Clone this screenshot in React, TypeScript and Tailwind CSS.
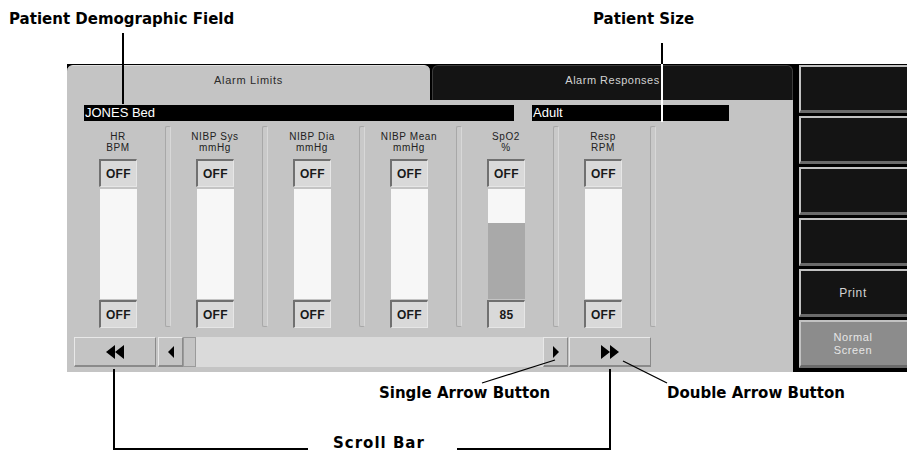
import React from 'react';

const COLUMNS = [
  { top: 'HR', unit: 'BPM', low: 'OFF' },
  { top: 'NIBP Sys', unit: 'mmHg', low: 'OFF' },
  { top: 'NIBP Dia', unit: 'mmHg', low: 'OFF' },
  { top: 'NIBP Mean', unit: 'mmHg', low: 'OFF' },
  { top: 'SpO2', unit: '%', low: '85', fill: true },
  { top: 'Resp', unit: 'RPM', low: 'OFF' },
];

const SIDE_KEYS = ['', '', '', '', 'Print'];

function DoubleArrow({ flip }: { flip?: boolean }) {
  return (
    <svg width="18" height="14" viewBox="0 0 18 14" className={flip ? 'rotate-180' : ''}>
      <polygon points="9,0 0,7 9,14" fill="#000" />
      <polygon points="18,0 9,7 18,14" fill="#000" />
    </svg>
  );
}

function SingleArrow({ flip }: { flip?: boolean }) {
  return (
    <svg width="6" height="12" viewBox="0 0 6 12" className={flip ? 'rotate-180' : ''}>
      <polygon points="6,0 0,6 6,12" fill="#000" />
    </svg>
  );
}

function ValueBox({ text }: { text: string }) {
  return (
    <div className="w-[38px] h-[28px] mx-auto flex items-center justify-center bg-[#d9d9d9] border-t-2 border-l-2 border-r border-b border-t-[#707070] border-l-[#707070] border-r-[#e6e6e6] border-b-[#e6e6e6] text-[12px] font-bold tracking-[0.4px] text-[#1a1a1a]">
      {text}
    </div>
  );
}

function Bevel({ className, children }: { className: string; children?: React.ReactNode }) {
  return (
    <div className={`flex items-center justify-center bg-[#c4c4c4] border-t border-l border-b-2 border-r border-t-[#e8e8e8] border-l-[#e8e8e8] border-b-[#8a8a8a] border-r-[#8a8a8a] ${className}`}>
      {children}
    </div>
  );
}

export default function App() {
  return (
    <div className="relative w-[907px] h-[452px] bg-white overflow-hidden font-['Liberation_Sans',Arial,sans-serif]">
      <div className="pl-[67px] pt-[64px]">
        <div className="w-[840px] h-[308px] bg-black flex overflow-hidden">
          {/* Main monitor panel */}
          <div className="w-[728px] flex flex-col">
            <div className="h-[36px] pt-[1px] flex gap-[2px]">
              <div className="w-[363px] bg-[#c4c4c4] rounded-t-[6px] border-t border-[#dedede] flex items-center justify-center pb-[6px] text-[11px] tracking-[0.7px] text-[#2a2a2a]">
                Alarm Limits
              </div>
              <div className="w-[361px] bg-[#141414] rounded-t-[6px] border border-b-0 border-[#3c3c3c] flex items-center justify-center pb-[6px] text-[11px] tracking-[0.5px] text-[#d2d2d2]">
                Alarm Responses
              </div>
            </div>

            <div className="flex-1 bg-[#c4c4c4] flex flex-col">
              <div className="mt-[5px] pl-[17px] flex gap-[18px] h-[16px]">
                <div className="w-[430px] bg-black text-white text-[13px] leading-[16px] pl-[1px]">JONES Bed</div>
                <div className="w-[197px] bg-black text-white text-[13px] leading-[16px] pl-[1px]">Adult</div>
              </div>

              <div className="mt-[5px] pl-[18px] flex">
                {COLUMNS.map((c) => (
                  <div key={c.top} className="flex">
                    <div className="w-[66px] pt-[5px] flex flex-col">
                      <div className="h-[23px] text-center text-[10px] leading-[11px] tracking-[0.6px] text-[#222]">
                        <div className="whitespace-nowrap">{c.top}</div>
                        <div>{c.unit}</div>
                      </div>
                      <div className="mt-[5px]">
                        <ValueBox text="OFF" />
                      </div>
                      <div className="mt-[2px] mx-auto w-[37px] h-[110px] bg-[#f7f7f7] flex flex-col justify-end">
                        {c.fill && <div className="h-[76px] bg-[#a9a9a9]" />}
                      </div>
                      <div className="mt-[1px]">
                        <ValueBox text={c.low} />
                      </div>
                    </div>
                    <div className="w-[14px]" />
                    <div className="w-[6px] h-[201px] bg-[#c9c9c9] border border-[#a8a8a8] border-r-[#d8d8d8] rounded-[2px]" />
                    <div className="w-[11px]" />
                  </div>
                ))}
              </div>

              <div className="mt-[9px] pl-[7px] flex items-start">
                <Bevel className="w-[82px] h-[30px]">
                  <DoubleArrow />
                </Bevel>
                <div className="ml-[2px] w-[410px] h-[30px] bg-[#dadada] flex">
                  <Bevel className="w-[25px] h-[30px]">
                    <SingleArrow />
                  </Bevel>
                  <div className="w-[13px] h-[30px] bg-[#c4c4c4] border border-[#9a9a9a]" />
                  <div className="flex-1" />
                  <Bevel className="w-[25px] h-[30px]">
                    <SingleArrow flip />
                  </Bevel>
                </div>
                <Bevel className="ml-[1px] w-[82px] h-[30px]">
                  <DoubleArrow flip />
                </Bevel>
              </div>
            </div>
          </div>

          {/* Side keys */}
          <div className="ml-[6px] pt-[1px] flex flex-col gap-[3px]">
            {SIDE_KEYS.map((k, i) => (
              <div
                key={i}
                className="w-[110px] h-[48px] bg-[#141414] border-t-2 border-l-2 border-b-[3px] border-t-[#c2c2c2] border-l-[#c2c2c2] border-b-[#6a6a6a] flex items-center justify-center text-[12px] tracking-[0.6px] text-[#d2d2d2] pr-[4px]"
              >
                {k}
              </div>
            ))}
            <div className="w-[110px] h-[48px] bg-[#8c8c8c] border-t-2 border-l-2 border-b-[3px] border-t-[#c2c2c2] border-l-[#c2c2c2] border-b-[#6a6a6a] flex flex-col items-center justify-center text-[11px] leading-[13px] tracking-[0.6px] text-[#e6e6e6] pr-[4px]">
              <span>Normal</span>
              <span>Screen</span>
            </div>
          </div>
        </div>
      </div>

      {/* Callout lines */}
      <svg className="absolute inset-0 pointer-events-none" width="907" height="452" viewBox="0 0 907 452">
        <line x1="123" y1="33" x2="123" y2="104" stroke="#000" strokeWidth="2" />
        <line x1="662" y1="43" x2="662" y2="64" stroke="#000" strokeWidth="2" />
        <line x1="662" y1="64" x2="662" y2="122" stroke="#fff" strokeWidth="2" />
        <line x1="555" y1="360" x2="482" y2="383" stroke="#000" strokeWidth="1.3" />
        <line x1="623" y1="361" x2="667" y2="383" stroke="#000" strokeWidth="1.3" />
        <polyline points="114,369 114,449 308,449" fill="none" stroke="#000" strokeWidth="2" />
        <polyline points="457,449 610,449 610,369" fill="none" stroke="#000" strokeWidth="2" />
      </svg>

      {/* Callout labels */}
      <div className="absolute inset-0 pointer-events-none font-['DejaVu_Sans',sans-serif] font-bold text-[15px] leading-[15px] text-black whitespace-nowrap">
        <span className="absolute left-[9px] top-[12px]">Patient Demographic Field</span>
        <span className="absolute left-[593px] top-[12px]">Patient Size</span>
        <span className="absolute left-[379px] top-[386px]">Single Arrow Button</span>
        <span className="absolute left-[667px] top-[386px]">Double Arrow Button</span>
        <span className="absolute left-[333px] top-[436px] tracking-[1px]">Scroll Bar</span>
      </div>
    </div>
  );
}
